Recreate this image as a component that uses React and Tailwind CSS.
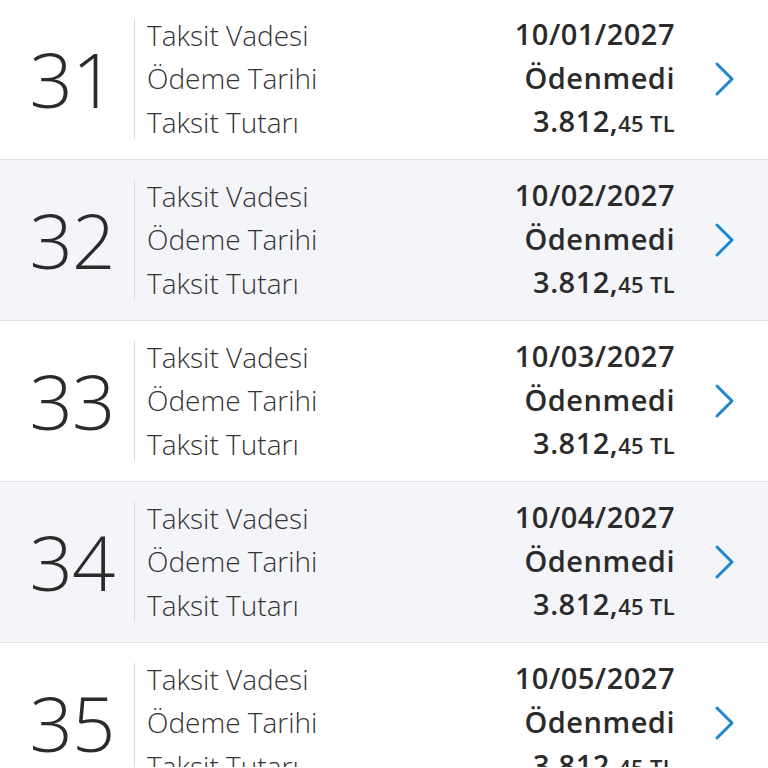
const rows = [
    { no: 31, date: "10/01/2027" },
    { no: 32, date: "10/02/2027" },
    { no: 33, date: "10/03/2027" },
    { no: 34, date: "10/04/2027" },
    { no: 35, date: "10/05/2027" },
];

const Chevron = () => (
    <svg width="24" height="36" viewBox="0 0 24 36" fill="none">
        <path d="M4 3 L19 18 L4 33" stroke="#1d87d0" strokeWidth="3" strokeLinecap="round" strokeLinejoin="round" />
    </svg>
);

const App = () => {
    return (
        <div className="w-[768px] h-[768px] overflow-hidden bg-white -mt-px" style={{ fontFamily: '"Open Sans", "Noto Sans", sans-serif' }}>
            {rows.map((row, i) => (
                <div
                    key={row.no}
                    className={`h-[161px] shrink-0 flex items-center border-b border-[#e0e2ea] ${i % 2 === 1 ? "bg-[#f4f5f9]" : "bg-white"}`}
                >
                    <div className="w-[134px] shrink-0 flex justify-center pl-[10px]">
                        <span className="text-[76px] font-light text-[#2b2b2b] leading-none tracking-[-1px]">{row.no}</span>
                    </div>
                    <div className="w-px h-[120px] bg-[#d9dadf] shrink-0"></div>
                    <div className="flex flex-col pl-[12px] text-[28px] font-light text-[#333333] leading-[43.5px]">
                        <span>Taksit Vadesi</span>
                        <span>Ödeme Tarihi</span>
                        <span>Taksit Tutarı</span>
                    </div>
                    <div className="flex-1 flex flex-col items-end text-[29px] font-semibold text-[#2b2b2b] leading-[43.5px] tracking-[0.5px]">
                        <span>{row.date}</span>
                        <span>Ödenmedi</span>
                        <span>
                            3.812,<span className="text-[22px] tracking-[0.3px]">45 TL</span>
                        </span>
                    </div>
                    <div className="w-[93px] shrink-0 flex justify-start pl-[38px]">
                        <Chevron />
                    </div>
                </div>
            ))}
        </div>
    );
};

export default App;
